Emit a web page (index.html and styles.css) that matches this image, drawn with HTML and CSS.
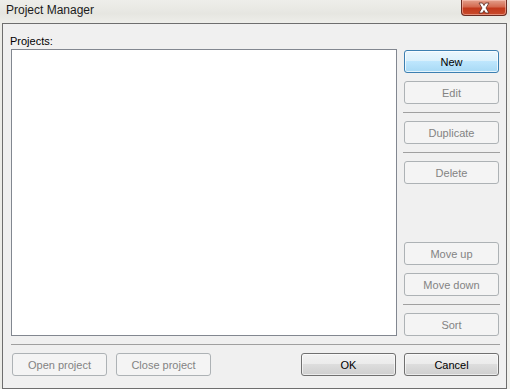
FILE: index.html
```html
<!DOCTYPE html>
<html lang="en">
<head>
    <meta charset="UTF-8">
    <title>Project Manager</title>
    <link rel="stylesheet" href="styles.css">
</head>
<body>
    <div id="window">
        <div id="titlebar">
            <span id="title">Project Manager</span>
            <button id="close-btn" title="Close">
                <svg width="16" height="12" viewBox="0 0 16 12">
                    <path d="M3 1 L6.5 1 L8 3.5 L9.5 1 L13 1 L10 6 L13 11 L9.5 11 L8 8.5 L6.5 11 L3 11 L6 6 Z"
                          fill="#ffffff" stroke="#5a2a22" stroke-width="0.8" stroke-linejoin="round"/>
                </svg>
            </button>
        </div>
        <div id="client">
            <div id="projects-label">Projects:</div>
            <div id="main-row">
                <div id="project-list"></div>
                <div id="side-buttons">
                    <button class="btn default">New</button>
                    <button class="btn" disabled>Edit</button>
                    <div class="sep"></div>
                    <button class="btn" disabled>Duplicate</button>
                    <div class="sep"></div>
                    <button class="btn" disabled>Delete</button>
                    <div class="spacer"></div>
                    <button class="btn" disabled>Move up</button>
                    <button class="btn" disabled>Move down</button>
                    <div class="sep"></div>
                    <button class="btn" disabled>Sort</button>
                </div>
            </div>
            <div class="sep bottom-sep"></div>
            <div id="bottom-row">
                <button class="btn" disabled>Open project</button>
                <button class="btn" disabled>Close project</button>
                <div class="spacer"></div>
                <button class="btn">OK</button>
                <button class="btn">Cancel</button>
            </div>
        </div>
    </div>
</body>
</html>
```

FILE: styles.css
```css
html, body {
    margin: 0;
    padding: 0;
}
body {
    width: 510px;
    height: 389px;
    overflow: hidden;
    font-family: "Liberation Sans", Arial, sans-serif;
    background: linear-gradient(90deg, #ecece8 0%, #f1f1ee 40%, #e9e9e4 70%, #f0f0ec 100%);
}
#window {
    width: 510px;
    height: 389px;
    display: flex;
    flex-direction: column;
}
#titlebar {
    height: 24px;
    display: flex;
    justify-content: space-between;
    align-items: flex-start;
    background: linear-gradient(180deg, #eeeeea 0%, #e6e6e1 60%, #eeeeea 100%);
}
#title {
    font-size: 12px;
    color: #1b1b1b;
    padding: 3px 0 0 6px;
}
#close-btn {
    width: 46px;
    height: 16px;
    margin: 0 3px 0 0;
    padding: 0;
    border: 1px solid #6a2c22;
    border-top: none;
    border-radius: 0 0 4px 4px;
    background: linear-gradient(180deg, #e3a08c 0%, #d46a50 45%, #c2391c 55%, #c84b2c 100%);
    box-shadow: inset 0 0 0 1px rgba(255, 210, 200, 0.5);
    display: flex;
    align-items: center;
    justify-content: center;
}
#client {
    margin: 0 3px 0 2px;
    height: 360px;
    border: 1px solid #6e6e6e;
    background: #f0f0f0;
    padding: 9px 6px 8px 8px;
    box-sizing: content-box;
    display: flex;
    flex-direction: column;
    font-size: 11px;
}
#projects-label {
    height: 16px;
    line-height: 16px;
    color: #000;
    padding-left: 0;
    margin-left: -1px;
}
#main-row {
    display: flex;
    height: 287px;
    gap: 6px;
}
#project-list {
    width: 384px;
    height: 285px;
    background: #fff;
    border: 1px solid #828790;
}
#side-buttons {
    width: 97px;
    display: flex;
    flex-direction: column;
    padding-top: 1px;
    box-sizing: border-box;
}
#side-buttons .btn {
    margin-left: 1px;
}
#side-buttons .btn + .btn {
    margin-top: 8px;
}
.spacer {
    flex: 1;
}
.sep {
    height: 0;
    border-top: 1px solid #a0a0a0;
    margin: 8px 0;
}
.bottom-sep {
    margin: 8px 0 8px 0;
}
#bottom-row {
    display: flex;
    height: 23px;
}
#bottom-row .btn:first-child {
    margin-left: 1px;
}
#bottom-row .btn:nth-child(2) {
    margin-left: 9px;
}
#bottom-row .btn:last-child {
    margin-left: 8px;
    margin-right: 1px;
}
.btn {
    width: 95px;
    height: 23px;
    box-sizing: border-box;
    font-family: "Liberation Sans", Arial, sans-serif;
    font-size: 11px;
    color: #000;
    border: 1px solid #707070;
    border-radius: 3px;
    background: linear-gradient(180deg, #f2f2f2 0%, #ebebeb 49%, #dddddd 50%, #cfcfcf 100%);
    box-shadow: inset 0 0 0 1px rgba(255, 255, 255, 0.6);
    padding: 0;
    flex-shrink: 0;
}
.btn.default {
    border-color: #3c7fb1;
    background: linear-gradient(180deg, #eaf6fd 0%, #d9f0fc 49%, #bee6fd 50%, #a7d9f5 100%);
    box-shadow: inset 0 0 0 1px rgba(255, 255, 255, 0.7);
}
.btn:disabled {
    color: #838383;
    border-color: #adb2b5;
    background: #f4f4f4;
    box-shadow: none;
}
```
